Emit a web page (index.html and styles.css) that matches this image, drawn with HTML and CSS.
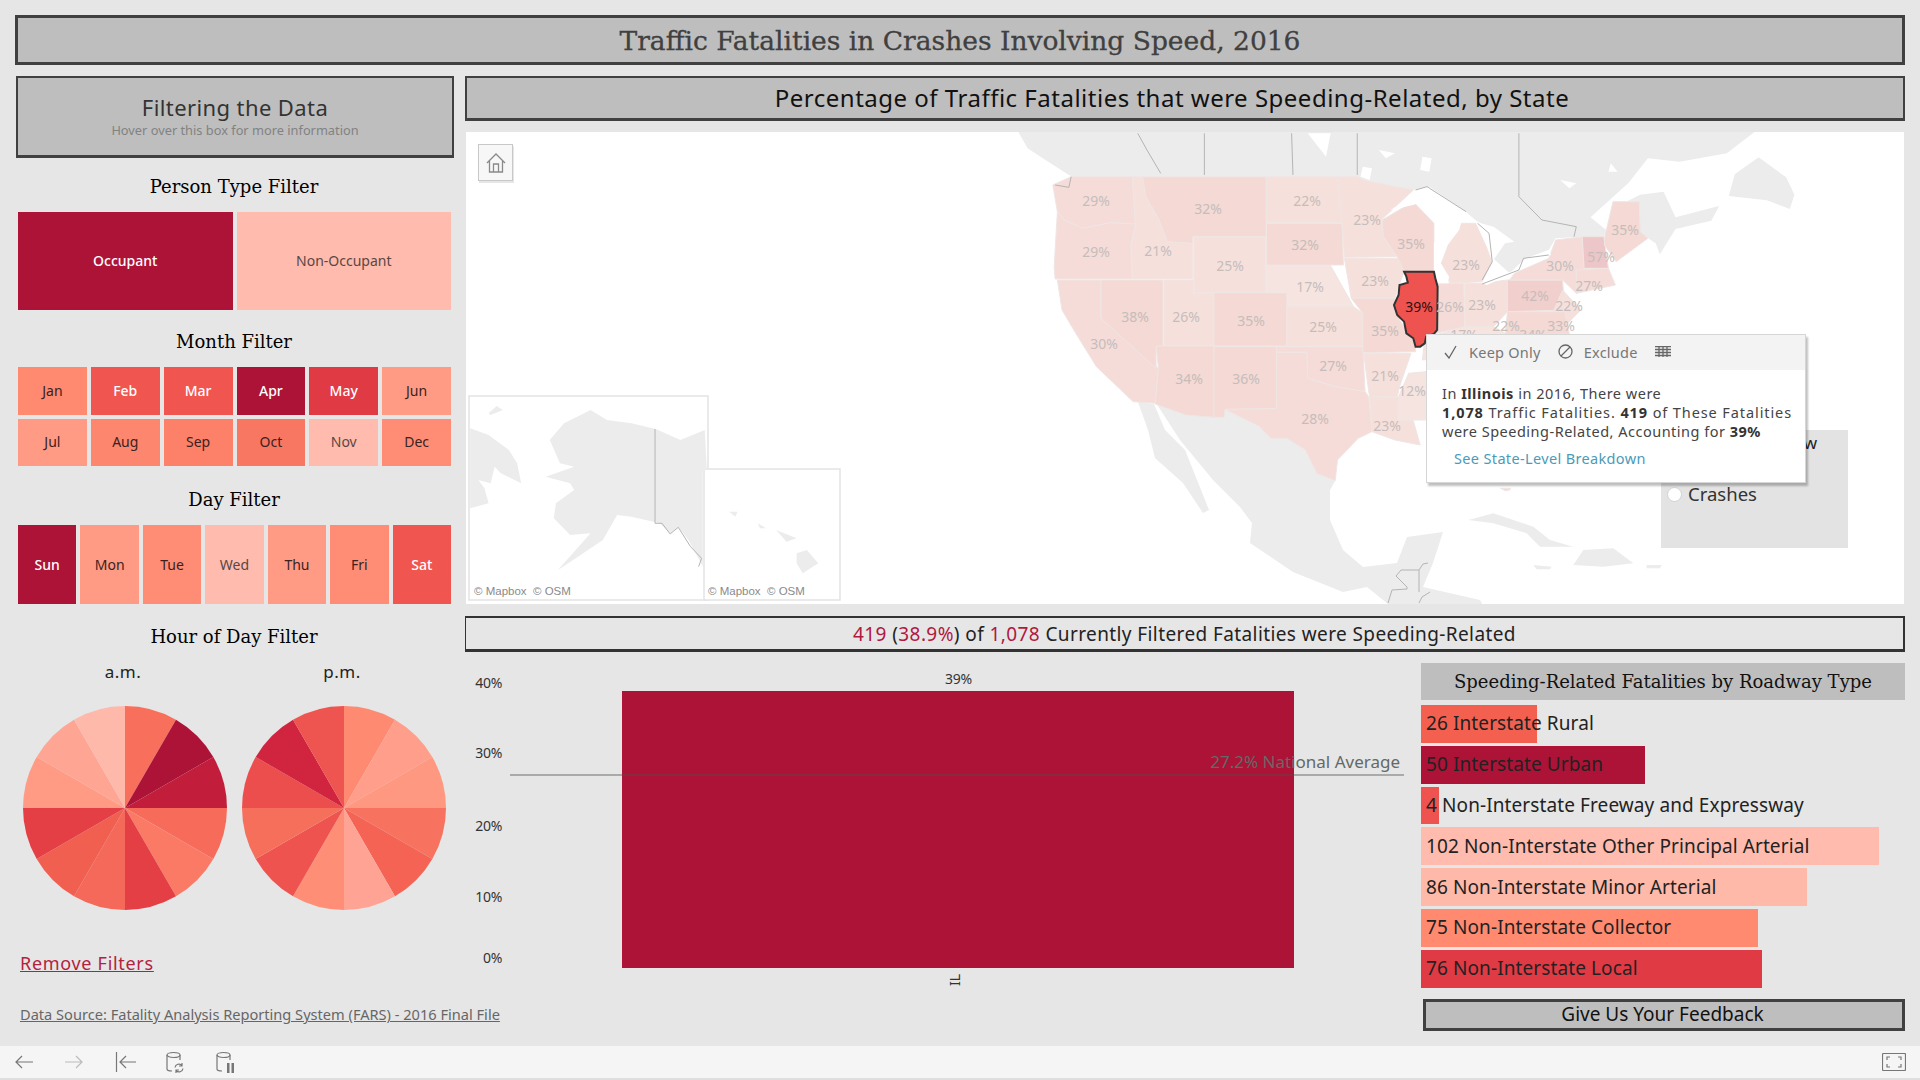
FILE: index.html
```html
<!DOCTYPE html>
<html lang="en">
<head>
    <meta charset="UTF-8">
    <title>Traffic Fatalities in Crashes Involving Speed, 2016</title>
    <link rel="stylesheet" href="styles.css">
</head>
<body>
<div class="dash">
    <h1 class="title">Traffic Fatalities in Crashes Involving Speed, 2016</h1>
    <div class="main">
        <div class="left">
            <div class="filter-box">
                <div class="filter-box-head">Filtering the Data</div>
                <div class="filter-box-sub">Hover over this box for more information</div>
            </div>

            <h3 class="heading person-heading">Person Type Filter</h3>
            <div class="cells person-cells">
                <div class="cell c-dark on">Occupant</div>
                <div class="cell c-pale faded">Non-Occupant</div>
            </div>

            <h3 class="heading month-heading">Month Filter</h3>
            <div class="cells month-cells">
                <div class="cell c-jan">Jan</div>
                <div class="cell c-feb on">Feb</div>
                <div class="cell c-feb on">Mar</div>
                <div class="cell c-dark on">Apr</div>
                <div class="cell c-may on">May</div>
                <div class="cell c-jun">Jun</div>
                <div class="cell c-jun">Jul</div>
                <div class="cell c-aug">Aug</div>
                <div class="cell c-sep">Sep</div>
                <div class="cell c-oct">Oct</div>
                <div class="cell c-pale faded">Nov</div>
                <div class="cell c-dec">Dec</div>
            </div>

            <h3 class="heading day-heading">Day Filter</h3>
            <div class="cells day-cells">
                <div class="cell c-dark on">Sun</div>
                <div class="cell c-jun">Mon</div>
                <div class="cell c-dec">Tue</div>
                <div class="cell c-pale faded">Wed</div>
                <div class="cell c-jun">Thu</div>
                <div class="cell c-dec">Fri</div>
                <div class="cell c-feb on">Sat</div>
            </div>

            <h3 class="heading hour-heading">Hour of Day Filter</h3>
            <div class="pies">
                <div class="pie-col">
                    <div class="pie-label">a.m.</div>
                    <svg class="pie" viewBox="-102 -102 204 204">
                        <path fill="#f8705c" d="M0 0L0 -102A102 102 0 0 1 51 -88.3Z"/>
                        <path fill="#ad1237" d="M0 0L51 -88.3A102 102 0 0 1 88.3 -51Z"/>
                        <path fill="#c21d3b" d="M0 0L88.3 -51A102 102 0 0 1 102 0Z"/>
                        <path fill="#f76b5a" d="M0 0L102 0A102 102 0 0 1 88.3 51Z"/>
                        <path fill="#fa7a66" d="M0 0L88.3 51A102 102 0 0 1 51 88.3Z"/>
                        <path fill="#e53f46" d="M0 0L51 88.3A102 102 0 0 1 0 102Z"/>
                        <path fill="#f4695a" d="M0 0L0 102A102 102 0 0 1 -51 88.3Z"/>
                        <path fill="#f15f50" d="M0 0L-51 88.3A102 102 0 0 1 -88.3 51Z"/>
                        <path fill="#e53f46" d="M0 0L-88.3 51A102 102 0 0 1 -102 0Z"/>
                        <path fill="#ff9a85" d="M0 0L-102 0A102 102 0 0 1 -88.3 -51Z"/>
                        <path fill="#ffa593" d="M0 0L-88.3 -51A102 102 0 0 1 -51 -88.3Z"/>
                        <path fill="#ffb9ab" d="M0 0L-51 -88.3A102 102 0 0 1 0 -102Z"/>
                    </svg>
                </div>
                <div class="pie-col">
                    <div class="pie-label">p.m.</div>
                    <svg class="pie" viewBox="-102 -102 204 204">
                        <path fill="#ff8a72" d="M0 0L0 -102A102 102 0 0 1 51 -88.3Z"/>
                        <path fill="#ff9e8a" d="M0 0L51 -88.3A102 102 0 0 1 88.3 -51Z"/>
                        <path fill="#ff9880" d="M0 0L88.3 -51A102 102 0 0 1 102 0Z"/>
                        <path fill="#f7735f" d="M0 0L102 0A102 102 0 0 1 88.3 51Z"/>
                        <path fill="#f46353" d="M0 0L88.3 51A102 102 0 0 1 51 88.3Z"/>
                        <path fill="#ffa494" d="M0 0L51 88.3A102 102 0 0 1 0 102Z"/>
                        <path fill="#ff8e76" d="M0 0L0 102A102 102 0 0 1 -51 88.3Z"/>
                        <path fill="#ef5350" d="M0 0L-51 88.3A102 102 0 0 1 -88.3 51Z"/>
                        <path fill="#f66f5b" d="M0 0L-88.3 51A102 102 0 0 1 -102 0Z"/>
                        <path fill="#ec4e4d" d="M0 0L-102 0A102 102 0 0 1 -88.3 -51Z"/>
                        <path fill="#d1243f" d="M0 0L-88.3 -51A102 102 0 0 1 -51 -88.3Z"/>
                        <path fill="#ee5450" d="M0 0L-51 -88.3A102 102 0 0 1 0 -102Z"/>
                    </svg>
                </div>
            </div>

            <a class="remove-link" href="#">Remove Filters</a>
            <a class="source-link" href="#">Data Source: Fatality Analysis Reporting System (FARS) - 2016 Final File</a>
        </div>

        <div class="right">
            <h2 class="map-title">Percentage of Traffic Fatalities that were Speeding-Related, by State</h2>

            <div class="map">
                <svg class="map-svg" viewBox="466 132 1438 472">
                    <!-- Canada and Mexico -->
                    <g class="land" transform="translate(1000 130) scale(.4592 .3333)">
                        <path d="M40 6L60 55L105 95L150 135L160 140L780 140L790 150L900 180L930 170L1010 240L1035 270L1060 290L1070 380L1110 430L1140 390L1195 360L1210 325L1265 320L1315 320L1320 300L1286 262L1368 160L1411 85L1480 95L1583 70L1643 6Z"/>
                        <path d="M1316 320L1342 230L1394 194L1445 185L1471 262L1566 228L1549 272L1471 297L1437 373L1428 340L1411 325Z"/>
                        <path d="M1587 198L1600 133L1652 82L1712 142L1730 194L1720 237L1670 211Z"/>
                    </g>
                    <path class="land" d="M1156 403L1186 415L1214 417L1225 409L1259 427L1287 438L1305 450L1317 473L1335 481L1330 490L1330 520L1343 550L1363 567L1397 563L1407 537L1443 532L1433 563L1423 587L1480 600L1482 604L1388 604L1367 587L1343 592L1293 572L1250 543L1252 523L1240 507L1213 480L1180 440Z"/>
                    <path class="land" d="M1138 402L1154 404L1165 430L1185 450L1209 510L1203 513L1183 483L1155 458L1148 430Z"/>
                    <g class="land" transform="translate(1400 300) scale(.3333)">
                        <path d="M205 660L280 640L400 680L450 720L520 740L420 740L380 700L280 670Z"/>
                        <path d="M550 750L640 745L700 790L610 800L520 795Z"/>
                        <path d="M740 795L785 795L780 805L740 805Z"/>
                        <path d="M400 795L455 800L450 808L410 808Z"/>
                        <path d="M55 905L90 880L200 895L245 905L240 912L55 912Z"/>
                    </g>

                    <!-- states, traced in a stretched grid -->
                    <g class="states" transform="translate(1000 130) scale(.4592 .3333)">
                        <path class="s-mid" d="M115 165L155 140L288 140L295 282L240 278L180 295L140 270L125 245Z"/>
                        <path class="s-mid" d="M125 245L140 270L180 295L240 278L295 282L285 345L288 447L120 447L118 410Z"/>
                        <path class="s-mid" d="M125 450L220 450L220 565L345 715L338 820L290 815L210 710L165 610L135 540Z"/>
                        <path class="s-high" d="M220 450L355 450L355 650L340 650L340 715L220 565Z"/>
                        <path class="s-low" d="M288 140L310 140L318 200L345 265L365 335L420 340L420 447L288 447L285 345L295 282Z"/>
                        <path class="s-high" d="M310 140L580 140L580 320L420 320L420 340L365 335L345 265L318 200Z"/>
                        <path class="s-low" d="M422 320L578 320L578 488L422 488Z"/>
                        <path class="s-low" d="M357 450L422 450L422 488L466 488L466 648L357 648Z"/>
                        <path class="s-high" d="M466 488L625 488L625 648L466 648Z"/>
                        <path class="s-high" d="M340 648L466 648L466 862L405 855L338 822L345 715Z"/>
                        <path class="s-high" d="M466 650L602 650L602 836L490 838L488 862L466 862Z"/>
                        <path class="s-low" d="M580 140L735 140L745 278L580 278Z"/>
                        <path class="s-high" d="M580 280L745 280L748 405L580 405Z"/>
                        <path class="s-pale" d="M580 407L720 407L770 530L625 530L625 488L580 488Z"/>
                        <path class="s-low" d="M625 530L770 530L790 550L790 648L625 648Z"/>
                        <path class="s-mid" d="M602 650L790 650L795 785L730 770L670 745L668 667L602 667Z"/>
                        <path class="s-mid" d="M602 667L668 667L670 745L730 770L795 785L803 800L810 905L780 925L735 990L730 1052L690 1030L665 960L625 925L590 925L565 890L490 838L602 836Z"/>
                        <path class="s-low" d="M735 140L780 140L790 150L900 180L830 270L835 320L865 380L750 382L745 280Z"/>
                        <path class="s-low" d="M750 385L868 385L880 425L868 470L860 505L765 505Z"/>
                        <path class="s-high" d="M765 505L860 505L870 570L905 640L905 665L790 668L790 550Z"/>
                        <path class="s-low" d="M792 670L895 670L870 770L865 800L805 800L803 785Z"/>
                        <path class="s-low" d="M805 800L868 802L865 870L900 872L915 945L860 930L810 905Z"/>
                        <path class="s-high" d="M832 270L900 215L945 280L945 425L880 425L865 380L835 320Z"/>
                        <path class="s-low" d="M960 400L975 345L1000 280L1040 280L1065 340L1072 395L1050 455L980 460Z"/>
                        <path class="s-mid" d="M952 460L1010 460L1012 590L950 610Z"/>
                        <path class="s-low" d="M1012 460L1050 460L1105 450L1105 545L1075 590L1012 590Z"/>
                        <path class="s-pale" d="M925 625L1012 590L1075 590L1100 610L1050 670L920 690Z"/>
                        <path class="s-pale" d="M890 730L928 725L928 870L865 870L868 800Z"/>
                        <path class="s-top" d="M1105 450L1225 450L1230 540L1105 545Z"/>
                        <path class="s-mid" d="M1120 430L1195 385L1210 330L1270 320L1275 410L1280 460L1255 490L1225 450L1110 450Z"/>
                        <path class="s-hot" d="M1268 320L1315 320L1325 415L1272 415Z"/>
                        <path class="s-high" d="M1317 320L1335 215L1392 215L1394 305L1411 325L1342 395L1316 345Z"/>
                        <path class="s-mid" d="M1255 420L1325 415L1340 465L1255 490Z"/>
                        <path class="s-low" d="M1225 480L1265 540L1250 560L1230 590L1200 560Z"/>
                        <path class="s-high" d="M1105 545L1230 545L1240 612L1100 615Z"/>
                        <path class="s-mid" d="M1090 1075L1112 1075L1110 1080L1100 1082Z"/>
                    </g>

                    <!-- great lakes and islands -->
                    <g class="water" transform="translate(1000 130) scale(.4592 .3333)">
                        <path d="M850 240L880 215L905 180L935 170L1015 245L1000 265L960 255L935 205L900 225Z"/>
                        <path d="M945 340L975 300L1005 275L1000 300L975 345L960 400L978 440L975 460L955 460L945 425Z"/>
                        <path d="M1035 275L1075 290L1120 335L1100 340L1072 395L1060 350L1040 290Z"/>
                        <path d="M1050 460L1130 415L1145 385L1195 360L1200 375L1150 395L1120 430L1060 465Z"/>
                        <path d="M920 80L940 85L935 125L915 120Z"/>
                        <path d="M670 10L720 10L710 80L690 45Z"/>
                        <path d="M825 60L860 70L840 85Z"/>
                        <path d="M790 110L810 115L805 150L785 140Z"/>
                        <path d="M1220 150L1255 160L1240 175Z"/>
                        <path d="M1330 100L1345 125L1325 125Z"/>
                    </g>

                    <!-- borders -->
                    <g class="borders" transform="translate(1000 130) scale(.4592 .3333)">
                        <path d="M300 10L320 60L350 130M445 10L445 135M635 10L638 135M778 10L778 135"/>
                        <path d="M1130 10L1130 200L1180 270L1255 290L1250 320"/>
                        <path d="M905 180L930 170L1015 245M1040 280L1065 310L1072 395L1050 450"/>
                        <path d="M1050 462L1130 420L1140 385L1195 375"/>
                        <path d="M120 165L150 172L155 140"/>
                    </g>
                    <path class="borders" d="M1396 576L1401 570L1419 570L1419 592M1396 576L1407 587L1407 589L1392 590L1388 603M1419 603L1422 597L1430 592M1419 570L1423 564L1428 563"/>

                    <!-- Illinois -->
                    <path class="illinois" transform="translate(1000 130) scale(.4592 .3333)" d="M880 425L945 425L948 445L953 470L952 600L945 612L928 620L925 640L915 650L905 650L900 625L885 610L880 575L865 555L858 525L868 495L870 465L888 458L885 440Z"/>

                    <g class="state-labels">
                        <text x="1096" y="200">29%</text>
                        <text x="1208" y="208">32%</text>
                        <text x="1307" y="200">22%</text>
                        <text x="1367" y="219">23%</text>
                        <text x="1411" y="243">35%</text>
                        <text x="1096" y="251">29%</text>
                        <text x="1158" y="250">21%</text>
                        <text x="1230" y="265">25%</text>
                        <text x="1305" y="244">32%</text>
                        <text x="1310" y="286">17%</text>
                        <text x="1375" y="280">23%</text>
                        <text x="1466" y="264">23%</text>
                        <text x="1601" y="256">57%</text>
                        <text x="1625" y="229">35%</text>
                        <text x="1560" y="265">30%</text>
                        <text x="1589" y="285">27%</text>
                        <text x="1535" y="295">42%</text>
                        <text x="1450" y="306">26%</text>
                        <text x="1482" y="304">23%</text>
                        <text x="1569" y="305">22%</text>
                        <text x="1135" y="316">38%</text>
                        <text x="1186" y="316">26%</text>
                        <text x="1251" y="320">35%</text>
                        <text x="1323" y="326">25%</text>
                        <text x="1385" y="330">35%</text>
                        <text x="1506" y="325">22%</text>
                        <text x="1561" y="325">33%</text>
                        <text x="1104" y="343">30%</text>
                        <text x="1333" y="365">27%</text>
                        <text x="1189" y="378">34%</text>
                        <text x="1246" y="378">36%</text>
                        <text x="1385" y="375">21%</text>
                        <text x="1412" y="390">12%</text>
                        <text x="1315" y="418">28%</text>
                        <text x="1387" y="425">23%</text>
                        <text x="1464" y="334">17%</text>
                        <text x="1533" y="334">34%</text>
                        <text class="label-on" x="1419" y="306">39%</text>
                    </g>

                    <!-- Alaska and Hawaii insets -->
                    <rect class="inset" x="469" y="396" width="239" height="204"/>
                    <rect class="inset" x="704" y="469" width="136" height="131"/>
                    <g class="land" transform="translate(460 130) scale(.408 .3333)">
                        <path d="M25 895L70 915L120 960L140 1000L150 1060L100 1030L85 1010L75 1060L45 1050L60 1075L70 1120L25 1135Z"/>
                        <path d="M70 850L90 828L105 840L75 855Z"/>
                        <path d="M320 840L360 870L420 880L480 897L540 930L600 900L605 1020L595 1020L595 1310L560 1230L535 1190L515 1210L490 1180L420 1160L385 1155L350 1230L290 1280L240 1320L320 1210L270 1215L230 1165L235 1120L280 1080L270 1060L210 1040L280 1010L245 1000L220 930L255 880Z"/>
                        <path d="M825 1270L850 1260L878 1300L840 1330L825 1300Z"/>
                        <path d="M775 1200L825 1225L800 1235Z"/>
                        <path d="M730 1180L750 1195L735 1195Z"/>
                        <path d="M660 1145L680 1145L675 1160Z"/>
                    </g>
                    <path class="borders" transform="translate(460 130) scale(.408 .3333)" d="M478 897L478 1180L495 1180L515 1212L535 1192L565 1250L592 1285L585 1310"/>
                    <text class="attribution" x="474" y="595">© Mapbox  © OSM</text>
                    <text class="attribution" x="708" y="595">© Mapbox  © OSM</text>
                </svg>

                <div class="home-btn">
                    <svg width="22" height="22" viewBox="0 0 22 22" class="icon">
                        <path d="M2 11L11 2L20 11M4.500 9V20H17.500V9M8.500 20V12H13.500V20"/>
                    </svg>
                </div>

                <div class="legend">
                    <div class="legend-head">View</div>
                    <label class="legend-row"><span class="radio"></span>Crashes</label>
                </div>

                <div class="tooltip">
                    <div class="tooltip-head">
                        <svg width="14" height="14" viewBox="0 0 14 14" class="icon icon-dark"><path d="M1 8L5 13L12 1"/></svg>
                        <span class="tip-action">Keep Only</span>
                        <svg width="15" height="15" viewBox="0 0 15 15" class="icon icon-dark"><circle cx="7.500" cy="7.500" r="6.500"/><path d="M3 12L12 3"/></svg>
                        <span class="tip-action">Exclude</span>
                        <svg width="16" height="12" viewBox="0 0 16 12" class="icon icon-dark"><path d="M0 .5H16M0 3.500H16M0 6.500H16M0 9.500H16M4 0V11M8 0V11M12 0V11"/></svg>
                    </div>
                    <div class="tooltip-body">
                        <p>In <b>Illinois</b> in 2016, There were<br><span class="tip-wide"><b>1,078</b> Traffic Fatalities. <b>419</b> of These Fatalities</span><br>were Speeding-Related, Accounting for <b>39%</b></p>
                        <a class="tip-link" href="#">See State-Level Breakdown</a>
                    </div>
                </div>
            </div>

            <div class="banner"><em>419</em> (<em>38.9%</em>) of <em>1,078</em> Currently Filtered Fatalities were Speeding-Related</div>

            <div class="lower">
                <div class="chart">
                    <span class="tick tick-40">40%</span>
                    <span class="tick tick-30">30%</span>
                    <span class="tick tick-20">20%</span>
                    <span class="tick tick-10">10%</span>
                    <span class="tick tick-0">0%</span>
                    <span class="bar-value">39%</span>
                    <div class="bar"></div>
                    <div class="ref-line"></div>
                    <span class="ref-label">27.2% National Average</span>
                    <span class="bar-name">IL</span>
                </div>
                <div class="side">
                    <h3 class="side-title">Speeding-Related Fatalities by Roadway Type</h3>
                    <div class="road-bars">
                        <div class="road"><div class="road-fill" style="width:116px;background:#f4604f"></div><span>26 Interstate Rural</span></div>
                        <div class="road"><div class="road-fill" style="width:224px;background:#ad1237"></div><span>50 Interstate Urban</span></div>
                        <div class="road"><div class="road-fill" style="width:18px;background:#ef5350"></div><span>4 Non-Interstate Freeway and Expressway</span></div>
                        <div class="road"><div class="road-fill" style="width:458px;background:#ffbbad"></div><span>102 Non-Interstate Other Principal Arterial</span></div>
                        <div class="road"><div class="road-fill" style="width:386px;background:#ffb9a9"></div><span>86 Non-Interstate Minor Arterial</span></div>
                        <div class="road"><div class="road-fill" style="width:337px;background:#ff8a70"></div><span>75 Non-Interstate Collector</span></div>
                        <div class="road"><div class="road-fill" style="width:341px;background:#e03a45"></div><span>76 Non-Interstate Local</span></div>
                    </div>
                    <div class="feedback">Give Us Your Feedback</div>
                </div>
            </div>
        </div>
    </div>
</div>

<div class="toolbar">
    <svg width="24" height="24" viewBox="0 0 24 24" class="tool"><path d="M21 12H4M10 6L4 12L10 18"/></svg>
    <svg width="24" height="24" viewBox="0 0 24 24" class="tool tool-off"><path d="M3 12H20M14 6L20 12L14 18"/></svg>
    <svg width="24" height="24" viewBox="0 0 24 24" class="tool"><path d="M4.500 2V22M24 12H8M14 6L8 12L14 18"/></svg>
    <svg width="24" height="24" viewBox="0 0 24 24" class="tool"><ellipse cx="11.500" cy="5" rx="6.500" ry="2.500"/><path d="M5 5V19Q5 21 10 21M18 5V10"/><path d="M13 17.500A4 4 0 0 1 20 15.500M21 18.500A4 4 0 0 1 14 20.500M20 13V16H17M14 23V20H17"/></svg>
    <svg width="24" height="24" viewBox="0 0 24 24" class="tool"><ellipse cx="11.500" cy="5" rx="6.500" ry="2.500"/><path d="M5 5V19Q5 21 10 21M18 5V10"/><path class="pause" d="M15 13H17.500V23H15ZM19.500 13H22V23H19.500Z"/></svg>
    <svg width="24" height="18" viewBox="0 0 24 18" class="tool full-btn"><rect x=".5" y=".5" width="23" height="17" rx="1"/><path d="M8 4H5V7M16 4H19V7M8 14H5V11M16 14H19V11"/></svg>
</div>
</body>
</html>
```
FILE: styles.css
```css
* {
    box-sizing: border-box;
}
body {
    margin: 0;
    width: 1920px;
    height: 1080px;
    overflow: hidden;
    background: #e6e6e6;
    color: #222;
    font-family: "Noto Sans", sans-serif;
    display: flex;
    flex-direction: column;
}
h1, h2, h3, p {
    margin: 0;
    font-weight: 400;
}
.dash {
    height: 1046px;
    padding: 15px 15px 0;
}
.title {
    height: 50px;
    border: 3px solid #404040;
    background: #bebebe;
    color: #404040;
    font-family: "DejaVu Serif", serif;
    font-size: 26.500px;
    -webkit-text-stroke: .3px #404040;
    display: flex;
    align-items: center;
    justify-content: center;
}
.main {
    display: grid;
    grid-template-columns: 440px 1440px;
    column-gap: 10px;
    margin-top: 11px;
}

/* left column */
.filter-box {
    width: 438px;
    height: 82px;
    margin-left: 1px;
    border: 2px solid #404040;
    border-bottom-width: 3px;
    background: #bebebe;
    text-align: center;
    padding-top: 14px;
}
.filter-box-head {
    font-size: 22px;
    line-height: 31px;
    letter-spacing: .4px;
    color: #333;
}
.filter-box-sub {
    font-size: 12.800px;
    line-height: 14px;
    color: #828282;
}
.heading {
    height: 24px;
    line-height: 26px;
    text-align: center;
    color: #000;
    font-family: "DejaVu Serif", serif;
    font-size: 18px;
    padding-right: 2px;
}
.person-heading { margin: 16px 0 14px; }
.month-heading { margin: 19px 0 14px; }
.day-heading { margin: 21px 0 14px; }
.hour-heading { margin: 20px 0 12px; }
.cells {
    display: grid;
    margin: 0 4px 0 3px;
    column-gap: 4px;
    row-gap: 4px;
}
.person-cells {
    grid-template-columns: 1fr 1fr;
    grid-template-rows: 98px;
}
.month-cells {
    grid-template-columns: repeat(6, 1fr);
    grid-template-rows: 48px 47px;
}
.day-cells {
    grid-template-columns: repeat(7, 1fr);
    grid-template-rows: 79px;
}
.cell {
    display: flex;
    align-items: center;
    justify-content: center;
    padding-bottom: 2px;
    font-size: 14px;
    color: #3a2220;
}
.day-cells .cell {
    padding-bottom: 0;
}
.cell.on {
    color: #fff;
    font-weight: 500;
}
.cell.faded { color: #5a4744; }
.c-dark { background: #ad1237; }
.c-pale { background: #ffbbad; }
.c-jan { background: #ff8a70; }
.c-feb { background: #f0554f; }
.c-may { background: #e03a45; }
.c-jun { background: #ff9a84; }
.c-aug { background: #fc866e; }
.c-sep { background: #fd8068; }
.c-oct { background: #f87762; }
.c-dec { background: #ff8d75; }
.pies {
    display: flex;
    gap: 15px;
    padding-left: 8px;
}
.pie-col {
    display: flex;
    flex-direction: column;
    align-items: center;
    gap: 22px;
}
.pie-label {
    height: 24px;
    line-height: 24px;
    font-size: 17px;
    letter-spacing: .5px;
    padding-right: 4px;
}
.pie {
    width: 204px;
    height: 204px;
    display: block;
}
.remove-link {
    display: block;
    margin: 41px 0 0 5px;
    line-height: 24px;
    font-size: 18px;
    letter-spacing: .7px;
    color: #b2223f;
}
.source-link {
    display: block;
    margin: 30px 0 0 5px;
    line-height: 18px;
    font-size: 14.600px;
    color: #666;
    white-space: nowrap;
}

/* right column */
.map-title {
    height: 45px;
    border: 2px solid #404040;
    border-bottom-width: 3px;
    background: #bebebe;
    color: #111;
    font-size: 24px;
    letter-spacing: .5px;
    padding: 0 26px 2px 0;
    display: flex;
    align-items: center;
    justify-content: center;
}
.map {
    position: relative;
    height: 472px;
    margin: 11px 1px 0;
    background: #fff;
}
.map-svg {
    position: absolute;
    left: 0;
    top: 0;
    width: 1438px;
    height: 472px;
}
.land { fill: #ececec; }
.water { fill: #fff; }
.states path {
    stroke: #efe6e4;
    stroke-width: 1;
    vector-effect: non-scaling-stroke;
}
.s-pale { fill: #f6e4e1; }
.s-low { fill: #f6e0dc; }
.s-mid { fill: #f5dcd8; }
.s-high { fill: #f4d9d5; }
.s-top { fill: #f1cfcd; }
.s-hot { fill: #ecc6c8; }
.borders {
    fill: none;
    stroke: #b4b4b4;
    stroke-width: 1;
    vector-effect: non-scaling-stroke;
}
.borders path { vector-effect: non-scaling-stroke; }
.illinois {
    fill: #ef5350;
    stroke: #333;
    stroke-width: 2;
    vector-effect: non-scaling-stroke;
}
.state-labels text {
    fill: #c6bdbb;
    font-size: 14px;
    text-anchor: middle;
    dominant-baseline: central;
}
.state-labels .label-on { fill: #2a1010; }
.inset {
    fill: #fff;
    stroke: #e3e3e3;
    stroke-width: 1.500;
}
.attribution {
    fill: #8a8a8a;
    font-family: "Liberation Sans", sans-serif;
    font-size: 11.500px;
    white-space: pre;
}
.home-btn {
    position: absolute;
    left: 12px;
    top: 12px;
    width: 35px;
    height: 37px;
    background: #f7f7f7;
    border: 1px solid #c8c8c8;
    box-shadow: 1px 2px 0 #e6e6e6;
    display: flex;
    align-items: center;
    justify-content: center;
}
.icon {
    fill: none;
    stroke: #8a8a8a;
    stroke-width: 1.300;
}
.icon-dark { stroke: #666; }
.legend {
    position: absolute;
    left: 1195px;
    top: 298px;
    width: 187px;
    height: 118px;
    background: #e3e3e3;
    padding: 1px 31px 0 6px;
}
.legend-head {
    text-align: right;
    font-size: 17px;
    line-height: 24px;
    color: #222;
}
.legend-row {
    display: flex;
    align-items: center;
    gap: 6px;
    margin-top: 26px;
    font-size: 18.500px;
    line-height: 26px;
    color: #333;
}
.radio {
    width: 15px;
    height: 15px;
    border-radius: 50%;
    background: #fff;
    border: 1px solid #d2d2d2;
}
.tooltip {
    position: absolute;
    left: 960px;
    top: 202px;
    width: 380px;
    height: 149px;
    background: #fff;
    border: 1px solid #d6d6d6;
    box-shadow: 2px 3px 2px rgba(0, 0, 0, .25);
}
.tooltip-head {
    height: 35px;
    background: #f3f3f3;
    display: flex;
    align-items: center;
    padding: 0 0 2px 17px;
}
.tip-action {
    font-size: 14.500px;
    letter-spacing: .25px;
    color: #777;
    margin: 0 17px 0 11px;
}
.tooltip-body {
    padding: 14px 15px 0;
    font-size: 14.500px;
    line-height: 19px;
    letter-spacing: .5px;
    color: #444;
    white-space: nowrap;
}
.tooltip-body b { color: #333; }
.tip-wide {
    letter-spacing: .9px;
}
.tip-link {
    display: block;
    margin: 8px 0 0 12px;
    letter-spacing: .35px;
    color: #4a9bb8;
    text-decoration: none;
}
.banner {
    height: 36px;
    margin-top: 12px;
    border: 2px solid #333;
    border-bottom-width: 3px;
    border-left-width: 1px;
    font-size: 19px;
    letter-spacing: .4px;
    color: #222;
    display: flex;
    align-items: center;
    justify-content: center;
    white-space: pre;
}
.banner em {
    font-style: normal;
    color: #b0183e;
}
.lower {
    display: grid;
    grid-template-columns: 956px 484px;
}
.chart {
    position: relative;
    height: 394px;
    font-size: 14px;
    color: #333;
}
.tick {
    position: absolute;
    right: 919px;
    line-height: 18px;
    letter-spacing: -.3px;
}
.tick-40 { top: 22px; }
.tick-30 { top: 92px; }
.tick-20 { top: 165px; }
.tick-10 { top: 236px; }
.tick-0 { top: 297px; }
.bar-value {
    position: absolute;
    left: 480px;
    top: 18px;
    line-height: 18px;
    letter-spacing: -.3px;
}
.bar {
    position: absolute;
    left: 157px;
    top: 39px;
    width: 672px;
    height: 277px;
    background: #ad1237;
}
.ref-line {
    position: absolute;
    left: 45px;
    top: 122px;
    width: 894px;
    height: 2px;
    background: rgba(80, 80, 80, .4);
}
.ref-label {
    position: absolute;
    right: 21px;
    top: 99px;
    font-size: 17px;
    line-height: 22px;
    color: #626a66;
    white-space: nowrap;
}
.bar-name {
    position: absolute;
    left: 484px;
    top: 319px;
    line-height: 18px;
    transform: rotate(-90deg);
}
.side {
    padding-top: 11px;
}
.side-title {
    height: 37px;
    line-height: 37px;
    background: #bebebe;
    text-align: center;
    color: #111;
    font-family: "DejaVu Serif", serif;
    font-size: 18px;
}
.road-bars {
    display: flex;
    flex-direction: column;
    gap: 3px;
    margin-top: 5px;
}
.road {
    position: relative;
    height: 37.800px;
    display: flex;
    align-items: center;
    padding: 0 0 1px 5px;
    font-size: 19px;
    letter-spacing: .1px;
    color: #222;
    white-space: nowrap;
}
.road-fill {
    position: absolute;
    left: 0;
    top: 0;
    bottom: 0;
}
.road span {
    position: relative;
}
.feedback {
    height: 32px;
    margin: 11px 0 0 2px;
    border: 3px solid #404040;
    background: #bebebe;
    color: #111;
    font-size: 19px;
    padding: 0 3px 2px 0;
    display: flex;
    align-items: center;
    justify-content: center;
}

/* bottom toolbar */
.toolbar {
    height: 34px;
    background: #f5f5f5;
    border-bottom: 2px solid #dedede;
    display: flex;
    align-items: center;
    gap: 26px;
    padding: 0 14px 0 12px;
}
.tool {
    fill: none;
    stroke: #777;
    stroke-width: 1.200;
}
.tool-off { stroke: #bcbcbc; }
.tool .pause {
    fill: #777;
    stroke: none;
}
.full-btn {
    margin-left: auto;
}
```
